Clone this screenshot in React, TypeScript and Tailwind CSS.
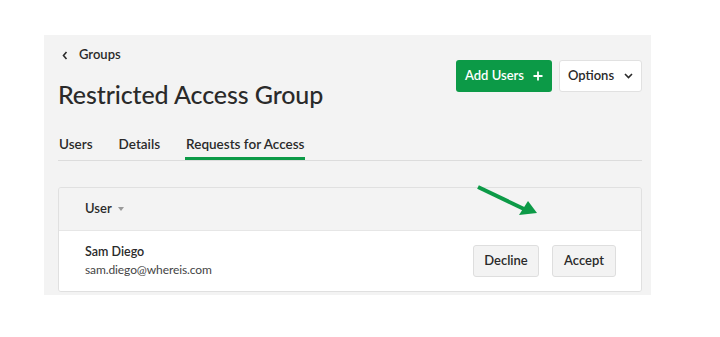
import React from 'react';

const font = { fontFamily: 'Lato, "Open Sans", sans-serif' };

const Arrow: React.FC = () => (
  <svg
    className="absolute left-[430px] top-[149px]"
    width="70"
    height="40"
    viewBox="0 0 70 40"
  >
    <line x1="4" y1="3" x2="50" y2="25" stroke="#0c9a47" strokeWidth="4" />
    <polygon points="54,17 63,29 45,31" fill="#0c9a47" />
  </svg>
);

const App: React.FC = () => {
  const tabs = ['Users', 'Details', 'Requests for Access'];

  return (
    <div className="w-[720px] h-[337px] bg-white pt-[35px] pl-[44px] text-[#2a2a2a]" style={font}>
      <div className="relative w-[607px] h-[260px] bg-[#f3f3f3] pl-[14px] pr-[9px] pt-[11px]">
        <div className="flex justify-between">
          <div>
            <div className="flex items-center h-[18px] pl-[4px] gap-[11px] text-[13px] font-semibold">
              <svg width="6" height="9" viewBox="0 0 6 9">
                <path d="M4.5 1 L1.5 4.5 L4.5 8" fill="none" stroke="#2a2a2a" strokeWidth="1.6" />
              </svg>
              <span>Groups</span>
            </div>
            <h1 className="mt-[13px] text-[25px] leading-[34px] font-medium tracking-[-0.1px]">
              Restricted Access Group
            </h1>
          </div>
          <div className="flex gap-[7px] mt-[14px]">
            <button className="w-[96px] h-[32px] rounded-[3px] bg-[#0c9a47] text-white text-[13px] font-semibold flex items-center justify-center gap-[9px]">
              Add Users
              <svg width="10" height="10" viewBox="0 0 10 10">
                <path d="M5 0.5 V9.5 M0.5 5 H9.5" stroke="white" strokeWidth="1.8" />
              </svg>
            </button>
            <button className="w-[83px] h-[32px] rounded-[3px] bg-white border border-[#e1e1e1] text-[13px] font-semibold flex items-center justify-center gap-[10px]">
              Options
              <svg width="9" height="6" viewBox="0 0 9 6">
                <path d="M1 1 L4.5 4.5 L8 1" fill="none" stroke="#2a2a2a" strokeWidth="1.6" />
              </svg>
            </button>
          </div>
        </div>

        <div className="mt-[24px] flex gap-[25px] border-b border-[#dcdcdc] h-[26px]">
          {tabs.map((t, i) => (
            <div key={t} className="relative text-[13.5px] font-semibold leading-[18px] pl-[1px]">
              {t}
              {i === 2 && (
                <div className="absolute left-0 right-0 top-[22px] h-[3px] bg-[#0c9a47]" />
              )}
            </div>
          ))}
        </div>

        <div className="mt-[26px] rounded-[3px] border border-[#e0e0e0] overflow-hidden">
          <div className="h-[43px] bg-[#f3f3f3] border-b border-[#e6e6e6] pl-[26px] flex items-center gap-[6px] text-[13px] font-semibold">
            User
            <svg width="6" height="4" viewBox="0 0 6 4">
              <path d="M0 0 H6 L3 4 Z" fill="#9a9a9a" />
            </svg>
          </div>
          <div className="h-[60px] bg-white pl-[26px] pr-[25px] flex items-center justify-between">
            <div className="text-[12.5px] leading-[18px]">
              <div className="font-semibold">Sam Diego</div>
              <div className="text-[#444] text-[12px] tracking-[-0.1px]">sam.diego@whereis.com</div>
            </div>
            <div className="flex gap-[13px]">
              <button className="w-[66px] h-[32px] rounded-[3px] bg-[#f3f3f3] border border-[#dedede] text-[13px] font-semibold">
                Decline
              </button>
              <button className="w-[64px] h-[32px] rounded-[3px] bg-[#f3f3f3] border border-[#dedede] text-[13px] font-semibold">
                Accept
              </button>
            </div>
          </div>
        </div>

        <Arrow />
      </div>
    </div>
  );
};

export default App;
